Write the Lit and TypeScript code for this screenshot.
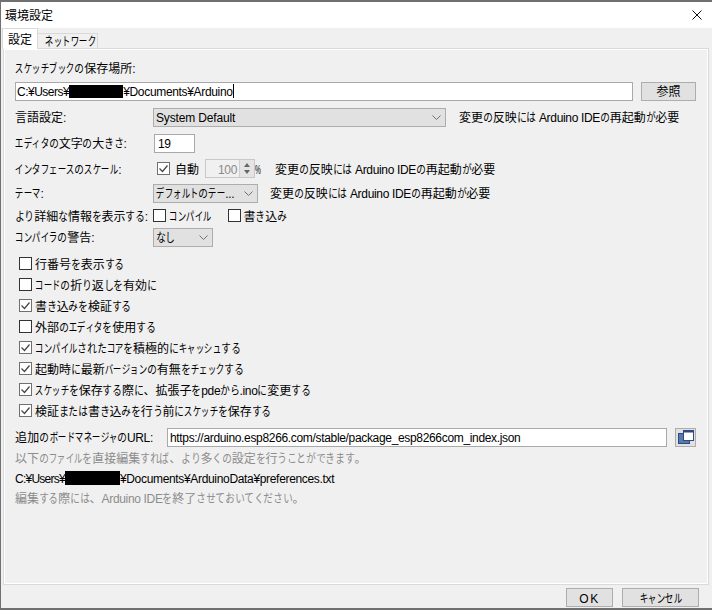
import { LitElement, html, css, svg, TemplateResult } from "lit";
import { customElement } from "lit/decorators.js";

const chevron = html`<svg class="chev" width="9" height="5" viewBox="0 0 9 5"><path d="M.5.5l4 4 4-4" fill="none" stroke="#707070" stroke-width="1"/></svg>`;
const checkMark = svg`<path d="M2.5 6.5l3 3 5-6" fill="none" stroke="#444" stroke-width="1.2"/>`;

function box(checked: boolean) {
  return html`<svg class="box" width="13" height="13" viewBox="0 0 13 13"><rect x="0.5" y="0.5" width="12" height="12" fill="#fff" stroke="${checked ? "#707070" : "#333"}"/>${checked ? checkMark : ""}</svg>`;
}

/* Meiryo UI sets kana narrower than kanji: hiragana and katakana get their own condensed cells. */
function t(text: string, cls = "") {
  const parts: (TemplateResult | string)[] = [];
  for (const run of text.match(/[\x20-\x7e¥]+|[^\x20-\x7e¥]/g) ?? []) {
    if (/^[\x20-\x7e¥]/.test(run)) parts.push(html`<span class="l">${run}</span>`);
    else if (/[\u3041-\u3096]/.test(run)) parts.push(html`<span class="h">${run}</span>`);
    else if (/[\u30a1-\u30fc]/.test(run)) parts.push(html`<span class="k">${run}</span>`);
    else parts.push(run);
  }
  return html`<span class="t ${cls}">${parts}</span>`;
}

const redacted = (w: number, h: number) => html`<span class="redact" style="width:${w}px;height:${h}px"></span>`;

const options: [boolean, string][] = [
  [false, "行番号を表示する"],
  [false, "コードの折り返しを有効に"],
  [true, "書き込みを検証する"],
  [false, "外部のエディタを使用する"],
  [true, "コンパイルされたコアを積極的にキャッシュする"],
  [true, "起動時に最新バージョンの有無をチェックする"],
  [true, "スケッチを保存する際に、拡張子をpdeから.inoに変更する"],
  [true, "検証または書き込みを行う前にスケッチを保存する"],
];

const NOTE = "変更の反映には Arduino IDEの再起動が必要";

@customElement("app-root")
export class AppRoot extends LitElement {
  static styles = css`
    :host {
      display: flex;
      flex-direction: column;
      width: 712px;
      height: 610px;
      box-sizing: border-box;
      border-left: 1px solid #707070;
      border-top: 2px solid #707070;
      border-bottom: 2px solid #707070;
      background: #f0f0f0;
      color: #000;
      font: 12px/14px "Liberation Sans", "Noto Sans CJK JP", sans-serif;
      overflow: hidden;
    }
    .t { display: inline-block; padding-top: 2px; white-space: nowrap; }
    .k, .h { display: inline-block; width: 12px; text-align: center; }
    .k { margin: 0 -1.75px; transform: scaleX(0.71); }
    .h { margin: 0 -1.2px; transform: scaleX(0.8); }
    .l { letter-spacing: -0.33px; white-space: pre; }
    .pre .l { letter-spacing: -0.5px; }
    .pre2 .l { letter-spacing: -0.75px; }
    .wide .l { letter-spacing: -0.15px; }
    .loose { letter-spacing: 0.3px; }
    .title { height: 26px; flex: none; background: #fff; display: flex; align-items: center; justify-content: space-between; padding: 0 10px 0 4px; }
    .tabs { height: 20px; flex: none; display: flex; align-items: flex-end; padding-left: 1px; }
    .tab { height: 15px; width: 60px; padding-left: 7px; display: flex; align-items: center; box-sizing: border-box; border: 1px solid #d9d9d9; border-bottom: 0; background: #f0f0f0; border-left: 0; }
    .tab.on { height: 21px; width: 36px; background: #fff; border-left: 1px solid #d9d9d9; padding-left: 5px; margin-bottom: -1px; position: relative; z-index: 1; }
    .panel { flex: none; height: 537px; margin: 0 3px 0 2px; box-sizing: border-box; border: 1px solid #d9d9d9; box-shadow: inset 0 0 0 1px #fff; padding: 9px 12px 0 11px; display: flex; flex-direction: column; }
    .row { display: flex; align-items: center; flex: none; }
    .lbl { width: 138px; flex: none; white-space: nowrap; }
    .h20 { height: 20px; } .h26 { height: 26px; } .h25 { height: 25px; } .h24 { height: 24px; }
    .h21 { height: 21px; } .h22 { height: 22px; } .h19 { height: 19px; }
    .field { background: #fff; border: 1px solid #a9a9a9; box-sizing: border-box; height: 19px; display: flex; align-items: center; padding: 0 1px; white-space: nowrap; }
    .path { width: 618px; margin-right: 8px; }
    .caret { width: 1px; height: 14px; background: #000; }
    .redact { display: inline-block; background: #000; flex: none; }
    .btn { background: #e1e1e1; border: 1px solid #adadad; box-sizing: border-box; display: flex; align-items: center; justify-content: center; height: 19px; }
    .browse { width: 55px; }
    .select { background: #e1e1e1; border: 1px solid #adadad; box-sizing: border-box; height: 19px; display: flex; align-items: center; justify-content: space-between; padding: 0 4px 0 2px; white-space: nowrap; }
    .s-lang { width: 293px; } .s-theme { width: 105px; } .s-warn { width: 60px; }
    .chev { flex: none; }
    .note { margin-left: 13px; white-space: nowrap; }
    .note.tight { margin-left: 0; }
    .note.theme { margin-left: 12px; }
    .size { width: 41px; margin-left: 1px; padding-left: 3px; }
    .box { flex: none; }
    .check { display: flex; align-items: center; gap: 3px; }
    .auto { margin-left: 4px; gap: 5px; }
    .second { margin-left: 16px; }
    .spin { width: 50px; height: 19px; border: 1px solid #c8c8c8; box-sizing: border-box; margin-left: 6px; display: flex; align-items: center; justify-content: flex-end; color: #8a8a8a; background: #f0f0f0; }
    .spin .arrows { width: 15px; height: 17px; margin-left: 2px; background: #e4e4e4; border-left: 1px solid #cfcfcf; box-sizing: border-box; display: flex; flex-direction: column; align-items: center; justify-content: center; gap: 3px; }
    .up { width: 0; height: 0; border: 3px solid transparent; border-top: 0; border-bottom: 4px solid #666; }
    .down { width: 0; height: 0; border: 3px solid transparent; border-bottom: 0; border-top: 4px solid #666; }
    .pct { width: 20px; flex: none; }
    .pct .t { transform: scaleX(0.55); transform-origin: left center; }
    .opts { margin-top: 5px; padding-left: 4px; display: flex; flex-direction: column; }
    .opts .check { height: 21px; gap: 3px; }
    .urlrow { margin-top: 5px; }
    .urllbl { width: 152px; flex: none; white-space: nowrap; }
    .url { width: 500px; margin-right: 8px; padding-left: 2px; }
    .iconbtn { width: 21px; }
    .muted { color: #8c8c8c; }
    .foot { flex: 1; display: flex; justify-content: flex-end; align-items: flex-start; gap: 9px; padding: 3px 13px 0 0; }
    .foot .btn { height: 19px; }
    .ok { width: 47px; }
    .ok .l { letter-spacing: 1.5px; }
    .cancel { width: 77px; }
  `;

  render() {
    return html`
      <div class="title">
        ${t("環境設定")}
        <svg width="10" height="10" viewBox="0 0 10 10"><path d="M.5.5l9 9M9.5.5l-9 9" stroke="#111" stroke-width="1" fill="none"/></svg>
      </div>
      <div class="tabs">
        <div class="tab on">${t("設定")}</div>
        <div class="tab">${t("ネットワーク")}</div>
      </div>
      <div class="panel">
        <div class="row h20">${t("スケッチブックの保存場所:")}</div>
        <div class="row h26">
          <div class="field path">${t("C:¥Users¥", "pre")}${redacted(54, 13)}${t("¥Documents¥Arduino")}<span class="caret"></span></div>
          <div class="btn browse">${t("参照")}</div>
        </div>
        <div class="row h26">
          <div class="lbl">${t("言語設定:")}</div>
          <div class="select s-lang">${t("System Default", "wide")}${chevron}</div>
          <span class="note">${t(NOTE)}</span>
        </div>
        <div class="row h26">
          <div class="lbl">${t("エディタの文字の大きさ:")}</div>
          <div class="field size">${t("19")}</div>
        </div>
        <div class="row h25">
          <div class="lbl">${t("インタフェースのスケール:")}</div>
          <div class="check auto">${box(true)}${t("自動")}</div>
          <div class="spin">${t("100")}<div class="arrows"><span class="up"></span><span class="down"></span></div></div>
          <span class="pct">${t("%")}</span>
          <span class="note tight">${t(NOTE)}</span>
        </div>
        <div class="row h24">
          <div class="lbl">${t("テーマ:")}</div>
          <div class="select s-theme">${t("デフォルトのテー...")}${chevron}</div>
          <span class="note theme">${t(NOTE)}</span>
        </div>
        <div class="row h21">
          <div class="lbl">${t("より詳細な情報を表示する:")}</div>
          <div class="check">${box(false)}${t("コンパイル")}</div>
          <div class="check second">${box(false)}${t("書き込み")}</div>
        </div>
        <div class="row h22">
          <div class="lbl">${t("コンパイラの警告:")}</div>
          <div class="select s-warn">${t("なし")}${chevron}</div>
        </div>
        <div class="opts">
          ${options.map(([c, s]) => html`<div class="check">${box(c)}${t(s)}</div>`)}
        </div>
        <div class="row h22 urlrow">
          <div class="urllbl">${t("追加のボードマネージャのURL:", "loose")}</div>
          <div class="field url">${t("https://arduino.esp8266.com/stable/package_esp8266com_index.json")}</div>
          <div class="btn iconbtn">
            <svg width="16" height="14" viewBox="0 0 16 14">
              <rect x="0.5" y="3.5" width="11" height="10" fill="#5a78a8" stroke="#2a4a80"/>
              <rect x="5.5" y="0.5" width="10" height="10" fill="#fff" stroke="#2a4a80"/>
              <rect x="5" y="0" width="11" height="2.5" fill="#2a4a80"/>
            </svg>
          </div>
        </div>
        <div class="row h20 muted">${t("以下のファイルを直接編集すれば、より多くの設定を行うことができます。")}</div>
        <div class="row h20">${t("C:¥Users¥", "pre2")}${redacted(55, 14)}${t("¥Documents¥ArduinoData¥preferences.txt")}</div>
        <div class="row h19 muted">${t("編集する際には、Arduino IDEを終了させておいてください。")}</div>
      </div>
      <div class="foot">
        <div class="btn ok">${t("OK")}</div>
        <div class="btn cancel">${t("キャンセル")}</div>
      </div>
    `;
  }
}
